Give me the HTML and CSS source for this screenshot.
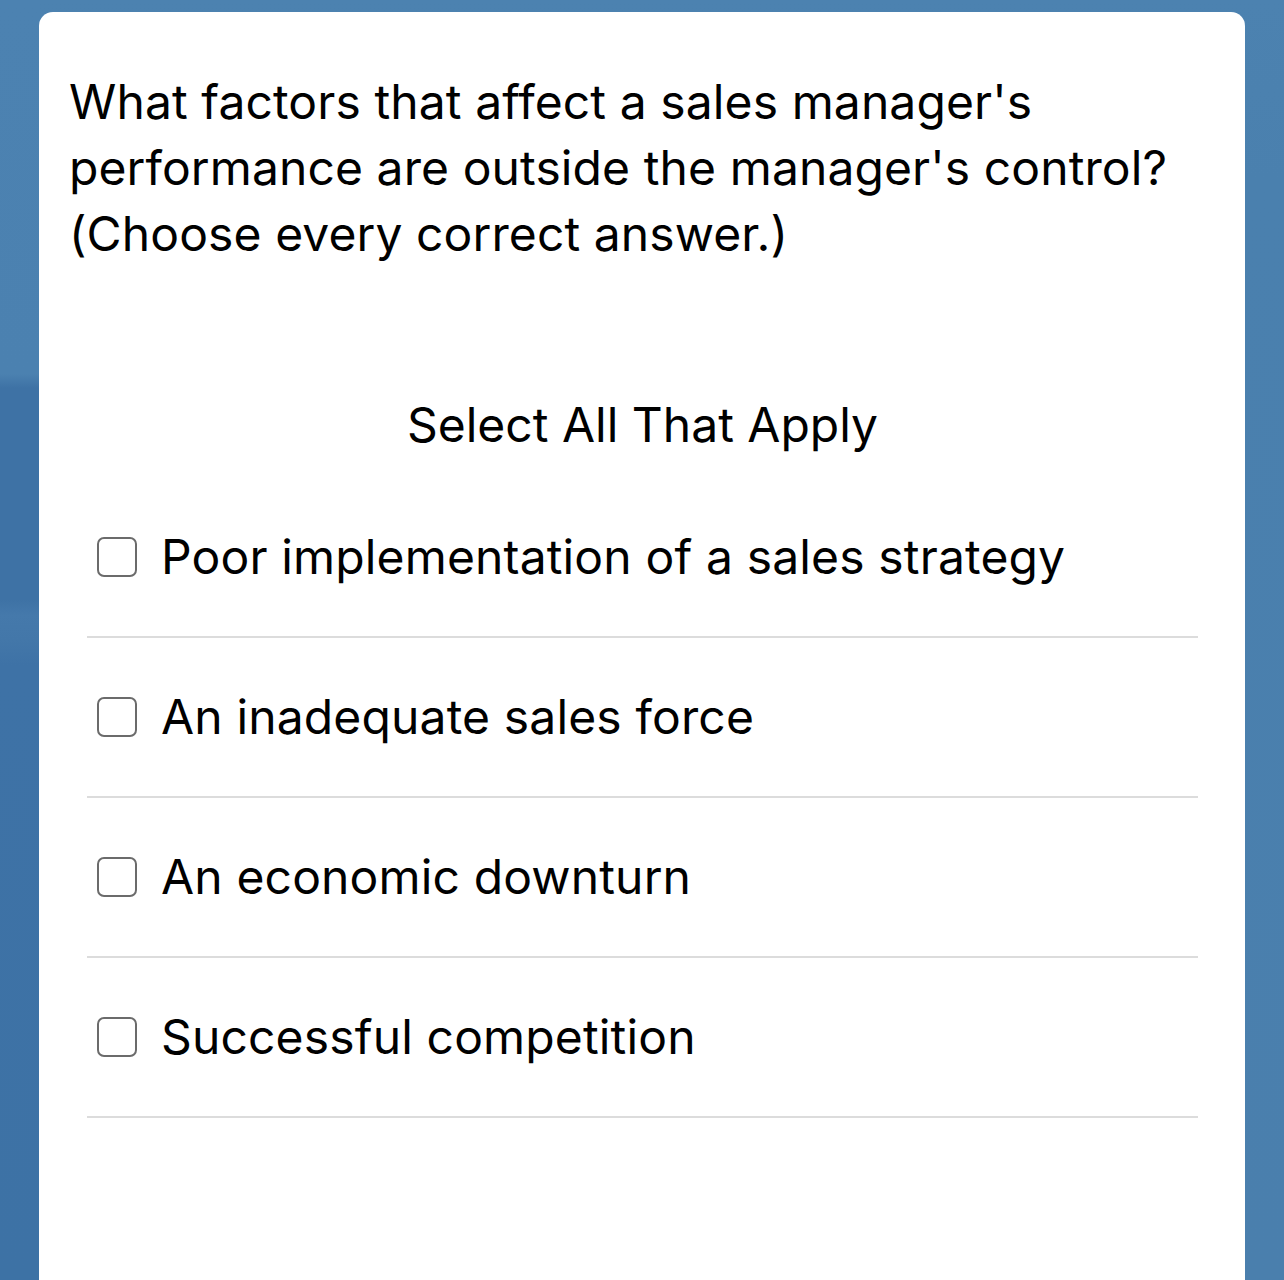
FILE: index.html
```html
<!DOCTYPE html>
<html>
<head>
<meta charset="utf-8">
<link rel="stylesheet" href="styles.css">
</head>
<body>
<div class="card">
  <p class="question">What factors that affect a sales manager's performance are outside the manager's control? (Choose every correct answer.)</p>
  <h2 class="instruction">Select All That Apply</h2>
  <ul class="options">
    <li class="option"><span class="box"></span><span class="label">Poor implementation of a sales strategy</span></li>
    <li class="option"><span class="box"></span><span class="label">An inadequate sales force</span></li>
    <li class="option"><span class="box"></span><span class="label">An economic downturn</span></li>
    <li class="option"><span class="box"></span><span class="label">Successful competition</span></li>
  </ul>
</div>
</body>
</html>
```
FILE: styles.css
```css
html, body {
  margin: 0;
  padding: 0;
  height: 1280px;
  overflow: hidden;
}
body {
  background:
    linear-gradient(to bottom, #4c82b1 0, #4b81b0 374px, #3e72a5 388px, #3e72a5 600px, #4579ab 615px, #4377a9 640px, #3e72a6 665px, #3d72a5 100%) left top / 40px 100% no-repeat,
    linear-gradient(to bottom, #4c82b0 0, #4a80ae 180px, #4a7fad 100%);
  font-family: Inter, Roboto, "Noto Sans", sans-serif;
  color: #000;
}
.card {
  margin: 12px 39px 0 39px;
  height: 1300px;
  background: #fff;
  border-radius: 14px;
  padding: 57px 47px 0 30px;
  box-sizing: border-box;
}
.question {
  margin: 0;
  font-size: 48px;
  line-height: 66px;
  letter-spacing: 0.1px;
}
.instruction {
  margin: 128px 0 0 0;
  font-weight: 400;
  font-size: 48px;
  line-height: 60px;
  text-align: center;
  padding-left: 18px;
}
.options {
  list-style: none;
  margin: 23px 0 0 18px;
  padding: 0;
}
.option {
  display: flex;
  align-items: center;
  gap: 24px;
  height: 158px;
  padding-left: 10px;
  border-bottom: 2px solid #dcdcdc;
}
.box {
  width: 36px;
  height: 36px;
  border: 2px solid #6b6b6b;
  border-radius: 7px;
  flex: none;
}
.label {
  font-size: 48px;
  line-height: 60px;
  letter-spacing: 0.15px;
}
```
